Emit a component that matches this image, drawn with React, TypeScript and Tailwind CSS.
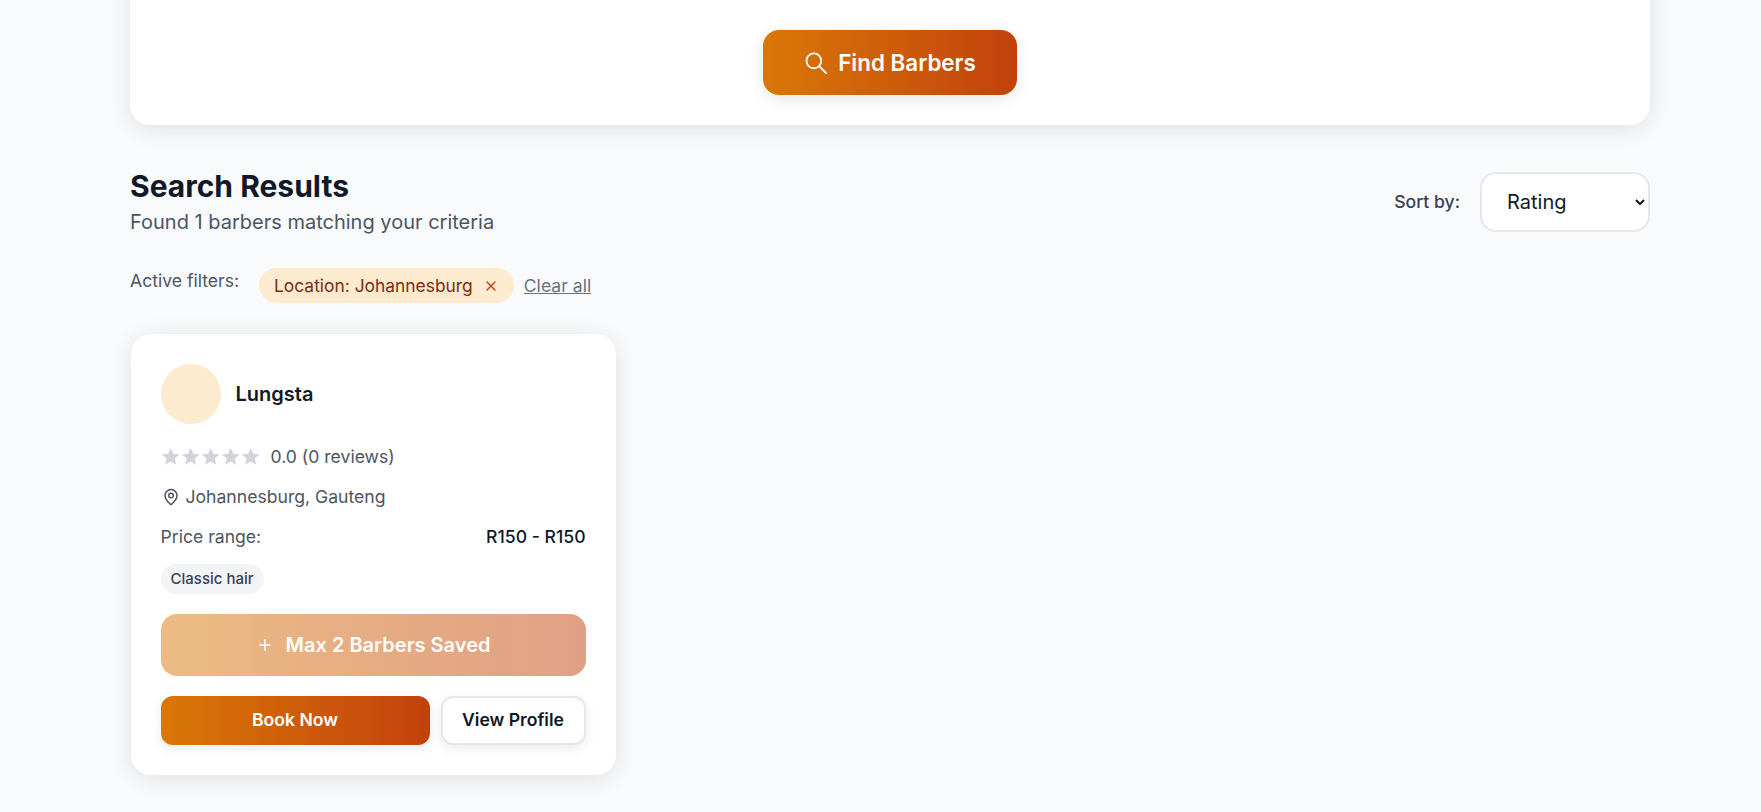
import { MapPin, Plus, X } from "lucide-react";

const brandGradient = "bg-gradient-to-r from-[#d97706] to-[#c2410c]";

function GreyStar() {
  return (
    <svg viewBox="2 2 20.5 20.5" className="h-5 w-5 fill-[#d1d5db]">
      <polygon points="12,3 14.59,8.94 21.04,9.56 16.18,13.86 17.58,20.19 12,16.9 6.42,20.19 7.82,13.86 2.96,9.56 9.41,8.94" />
    </svg>
  );
}

function SearchIcon() {
  return (
    <svg viewBox="0 0 24 24" className="h-6 w-6 fill-none stroke-white" strokeWidth={1.8} strokeLinecap="round">
      <circle cx="9.85" cy="9.85" r="7.4" />
      <line x1="15.2" y1="15.2" x2="22" y2="22" />
    </svg>
  );
}

function BarberCard() {
  return (
    <div className="ml-[0.5px] h-[441px] w-[485px] rounded-[20px] bg-white p-[30px] shadow-[0_4px_24px_rgba(0,0,0,0.1)]">
      <div className="flex items-center gap-[15px]">
        <div className="h-[60px] w-[60px] rounded-full bg-[#fdebd0]" />
        <h3 className="text-[20px] font-semibold text-[#111827]">Lungsta</h3>
      </div>
      <div className="mt-[21px] flex h-[24px] items-center gap-[10px]">
        <div className="flex">
          {[0, 1, 2, 3, 4].map((i) => (
            <GreyStar key={i} />
          ))}
        </div>
        <span className="text-[17.6px] text-[#4b5563]">0.0 (0 reviews)</span>
      </div>
      <div className="mt-4 flex h-[24px] items-center gap-1.5 text-[17.6px] text-[#4b5563]">
        <MapPin className="ml-[1px] h-[18px] w-[18px]" />
        <span>Johannesburg, Gauteng</span>
      </div>
      <div className="mt-4 flex h-[24px] items-center justify-between text-[17.6px]">
        <span className="text-[#4b5563]">Price range:</span>
        <span className="font-medium text-[#111827]">R150 - R150</span>
      </div>
      <div className="mt-[15px] flex">
        <span className="flex h-[30px] items-center rounded-full bg-[#f3f4f6] px-2.5 text-[15px] font-medium text-[#374151]">
          Classic hair
        </span>
      </div>
      <button className={`mt-5 flex h-[62px] w-full items-center justify-center gap-3 rounded-2xl text-[20px] font-semibold text-white opacity-50 ${brandGradient}`}>
        <Plus className="h-[18px] w-[18px]" />
        Max 2 Barbers Saved
      </button>
      <div className="mt-5 flex gap-[11px]">
        <button className={`h-[49px] w-[269px] rounded-xl text-[17.6px] font-semibold text-white shadow-[0_4px_12px_rgba(0,0,0,0.08)] ${brandGradient}`}>
          Book Now
        </button>
        <button className="h-[49px] flex-1 rounded-xl border-2 border-[#e5e7eb] bg-white text-[17.6px] font-semibold text-[#111827] shadow-[0_4px_12px_rgba(0,0,0,0.08)]">
          View Profile
        </button>
      </div>
    </div>
  );
}

export default function App() {
  return (
    <div className="h-screen overflow-hidden bg-[#f9fafb] font-['Inter',sans-serif]">
      <div className="ml-[130px] w-[1520px]">
        <div className="-mt-[40px] flex h-[165px] items-end justify-center rounded-[20px] bg-white pb-[30px] shadow-[0_4px_24px_rgba(0,0,0,0.1)]">
          <button className={`flex h-[65px] w-[254px] items-center justify-center gap-[10px] rounded-2xl text-[22.4px] font-semibold text-white shadow-[0_4px_16px_rgba(0,0,0,0.1)] ${brandGradient}`}>
            <SearchIcon />
            Find Barbers
          </button>
        </div>

        <div className="mt-[43px] flex items-center justify-between">
          <div>
            <h2 className="text-[30px] leading-[36px] font-bold text-[#111827]">Search Results</h2>
            <p className="mt-1 text-[20px] leading-[28px] text-[#4b5563]">Found 1 barbers matching your criteria</p>
          </div>
          <div className="flex items-center gap-5">
            <span className="text-[17.6px] font-medium text-[#374151]">Sort by:</span>
            <select className="h-[60px] w-[170px] rounded-2xl border-2 border-[#e5e7eb] bg-white px-[21px] text-[20px] text-[#111827]">
              <option>Rating</option>
            </select>
          </div>
        </div>

        <div className="mt-[32px] flex items-start">
          <span className="w-[129px] shrink-0 whitespace-nowrap text-[17.6px] text-[#4b5563]">Active filters:</span>
          <span className="flex h-[35px] items-center gap-[10px] rounded-full bg-[#fdebd0] px-[15px] pt-px text-[17.4px] text-[#7c2d12]">
            Location: Johannesburg
            <X className="h-4 w-4 text-[#c2410c]" />
          </span>
          <a className="ml-2.5 flex h-[35px] items-center pt-px text-[17.6px] text-[#6b7280] underline">Clear all</a>
        </div>

        <div className="mt-[31px]">
          <BarberCard />
        </div>
      </div>
    </div>
  );
}
